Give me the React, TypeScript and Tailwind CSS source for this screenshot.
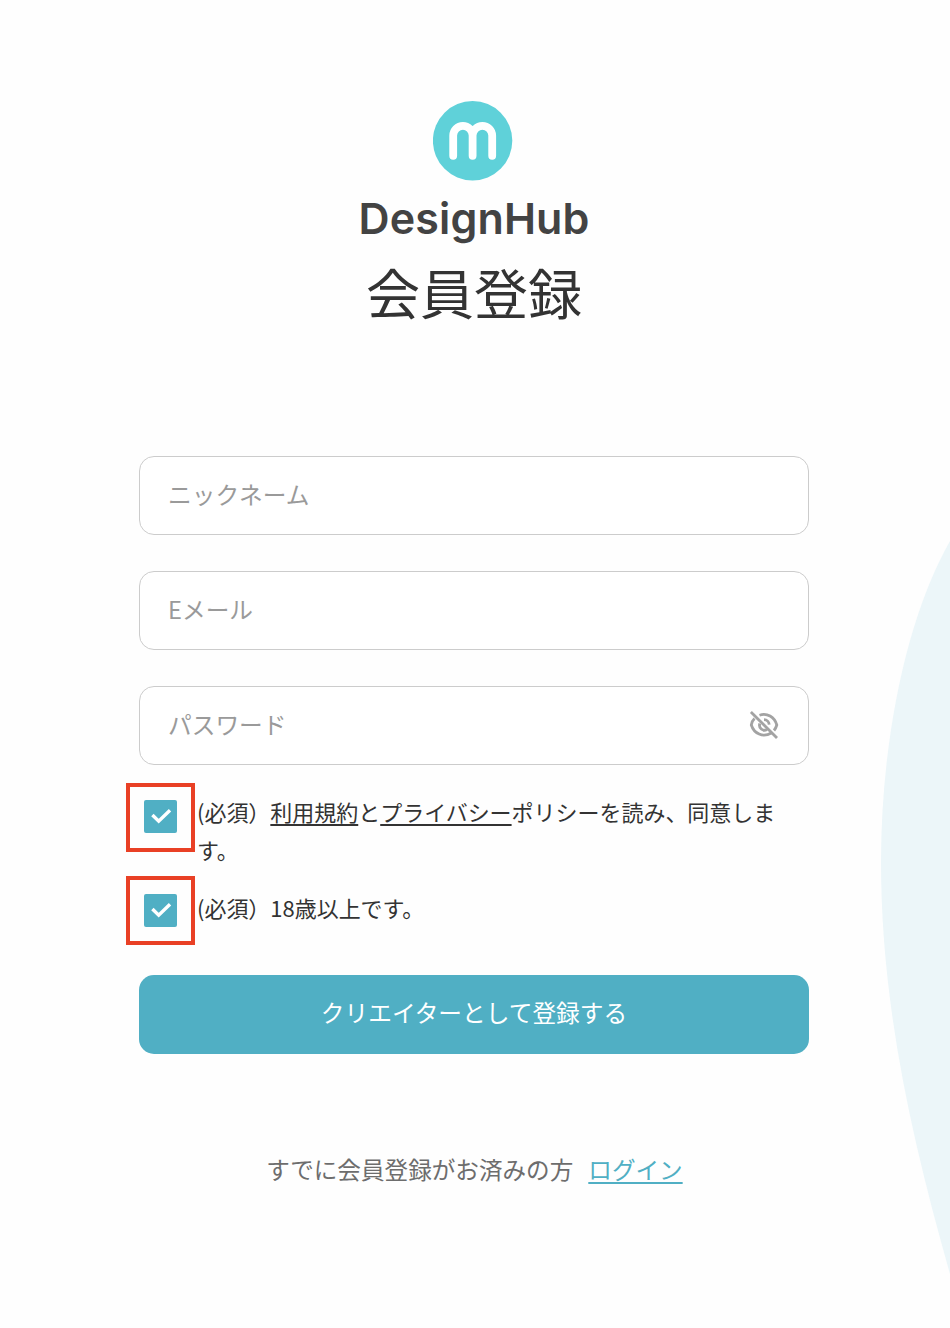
const font = "font-['Noto_Sans_CJK_JP',sans-serif]";

function Logo() {
  return (
    <svg className="block h-20 w-20" viewBox="0 0 80 80" aria-hidden="true">
      <circle cx="39.6" cy="39.7" r="39.7" fill="#5fd1d9" />
      <path
        d="M20.2 54.8V34.6a9.7 9.7 0 0 1 19.4 0V54.8M39.6 34.6a9.7 9.7 0 0 1 19.6 0V54.8"
        fill="none"
        stroke="#fff"
        strokeWidth="7.8"
        strokeLinecap="round"
      />
    </svg>
  );
}

function EyeOff() {
  return (
    <svg className="block h-10 w-10" viewBox="0 0 40 40" fill="none" stroke="#a3a3a3" strokeWidth="2.8" aria-hidden="true">
      <path d="M6.9 6 33 32" />
      <path d="M15.5 9.2C23 6.5 30.5 11 32.800 19c-.7 2.400-1.500 4-2.800 5.500" />
      <path d="M10.5 12.5c-1.700 1.600-2.700 3.500-3.200 6.500 2.700 8.500 11.500 13 20 8" />
      <path d="M15.800 17.500c-1.500 4.500 3 8.200 7.200 6M20 13.700c3 0 5 2.200 5.200 5" />
    </svg>
  );
}

function Field({ label, type, icon }: { label: string; type: string; icon?: boolean }) {
  return (
    <div className="flex h-[79px] items-center rounded-[15px] border border-[#cccccc] bg-white pl-7 pr-6">
      <input
        type={type}
        placeholder={label}
        className="h-full min-w-0 flex-1 bg-transparent pb-1 text-[23.7px] text-[#333] outline-none placeholder:text-[#9a9a9a]"
      />
      {icon && <EyeOff />}
    </div>
  );
}

function Check({ raised }: { raised?: boolean }) {
  return (
    <div
      className={`flex h-[69px] w-[69px] shrink-0 items-center justify-center border-4 border-[#e94025] ${raised ? "pb-0.5" : ""}`}
    >
      <svg className="block h-[33px] w-[33px]" viewBox="0 0 33 33" aria-hidden="true">
        <rect width="33" height="33" rx="2" fill="#50afc4" />
        <path d="m8.400 15 6.300 6.200L26 10.200" fill="none" stroke="#fff" strokeWidth="3.400" />
      </svg>
    </div>
  );
}

export default function App() {
  return (
    <main className={`relative flex h-[1328px] w-[950px] flex-col overflow-hidden bg-[#fefefe] text-[#333] ${font}`}>
      <svg className="absolute right-0 top-0 h-[1328px] w-[80px]" viewBox="870 0 80 1328" aria-hidden="true">
        <path d="M950 541C905 620 881 745 881 862C881 1005 912 1140 950 1274Z" fill="#ecf6f9" />
      </svg>
      <header className="flex w-[946px] flex-col items-center pt-[101px]">
        <Logo />
        <div className="mt-[7px] h-[60px] whitespace-nowrap pl-0.5 font-['Inter',sans-serif] text-[43px] font-semibold leading-[60px] tracking-[0.15px] text-[#434343]">
          DesignHub
        </div>
        <h1 className="mt-1 h-20 pl-0.5 text-[54px] leading-[80px]">会員登録</h1>
      </header>
      <form className="ml-[139px] mt-[124px] flex w-[670px] flex-col">
        <div className="flex flex-col gap-9">
          <Field label="ニックネーム" type="text" />
          <Field label="Eメール" type="email" />
          <Field label="パスワード" type="password" icon />
        </div>
        <div className="-ml-[13px] mt-[18px] flex flex-col gap-6 text-[21.97px] leading-[38px]">
          <div className="flex h-[69px] gap-0.5">
            <Check raised />
            <p className="pt-[10px]">
              <span className="block whitespace-nowrap">
                (必須）<a className="underline decoration-2 underline-offset-[3px]">利用規約</a>と
                <a className="underline decoration-2 underline-offset-[3px]">プライバシー</a>ポリシーを読み、同意しま
              </span>
              <span className="block">す。</span>
            </p>
          </div>
          <div className="flex h-[69px] gap-0.5">
            <Check />
            <p className="pt-[13px]">(必須）18歳以上です。</p>
          </div>
        </div>
        <button type="button" className="mt-[30px] h-[79px] rounded-[15px] bg-[#50afc4] pb-[3px] text-[23.7px] text-white">
          クリエイターとして登録する
        </button>
      </form>
      <p className="mt-[97px] flex w-[949px] justify-center gap-[15px] text-[23.6px] leading-9 text-[#6d6d6d]">
        すでに会員登録がお済みの方
        <a className="text-[#50afc4] underline decoration-2 underline-offset-[3px]">ログイン</a>
      </p>
    </main>
  );
}
